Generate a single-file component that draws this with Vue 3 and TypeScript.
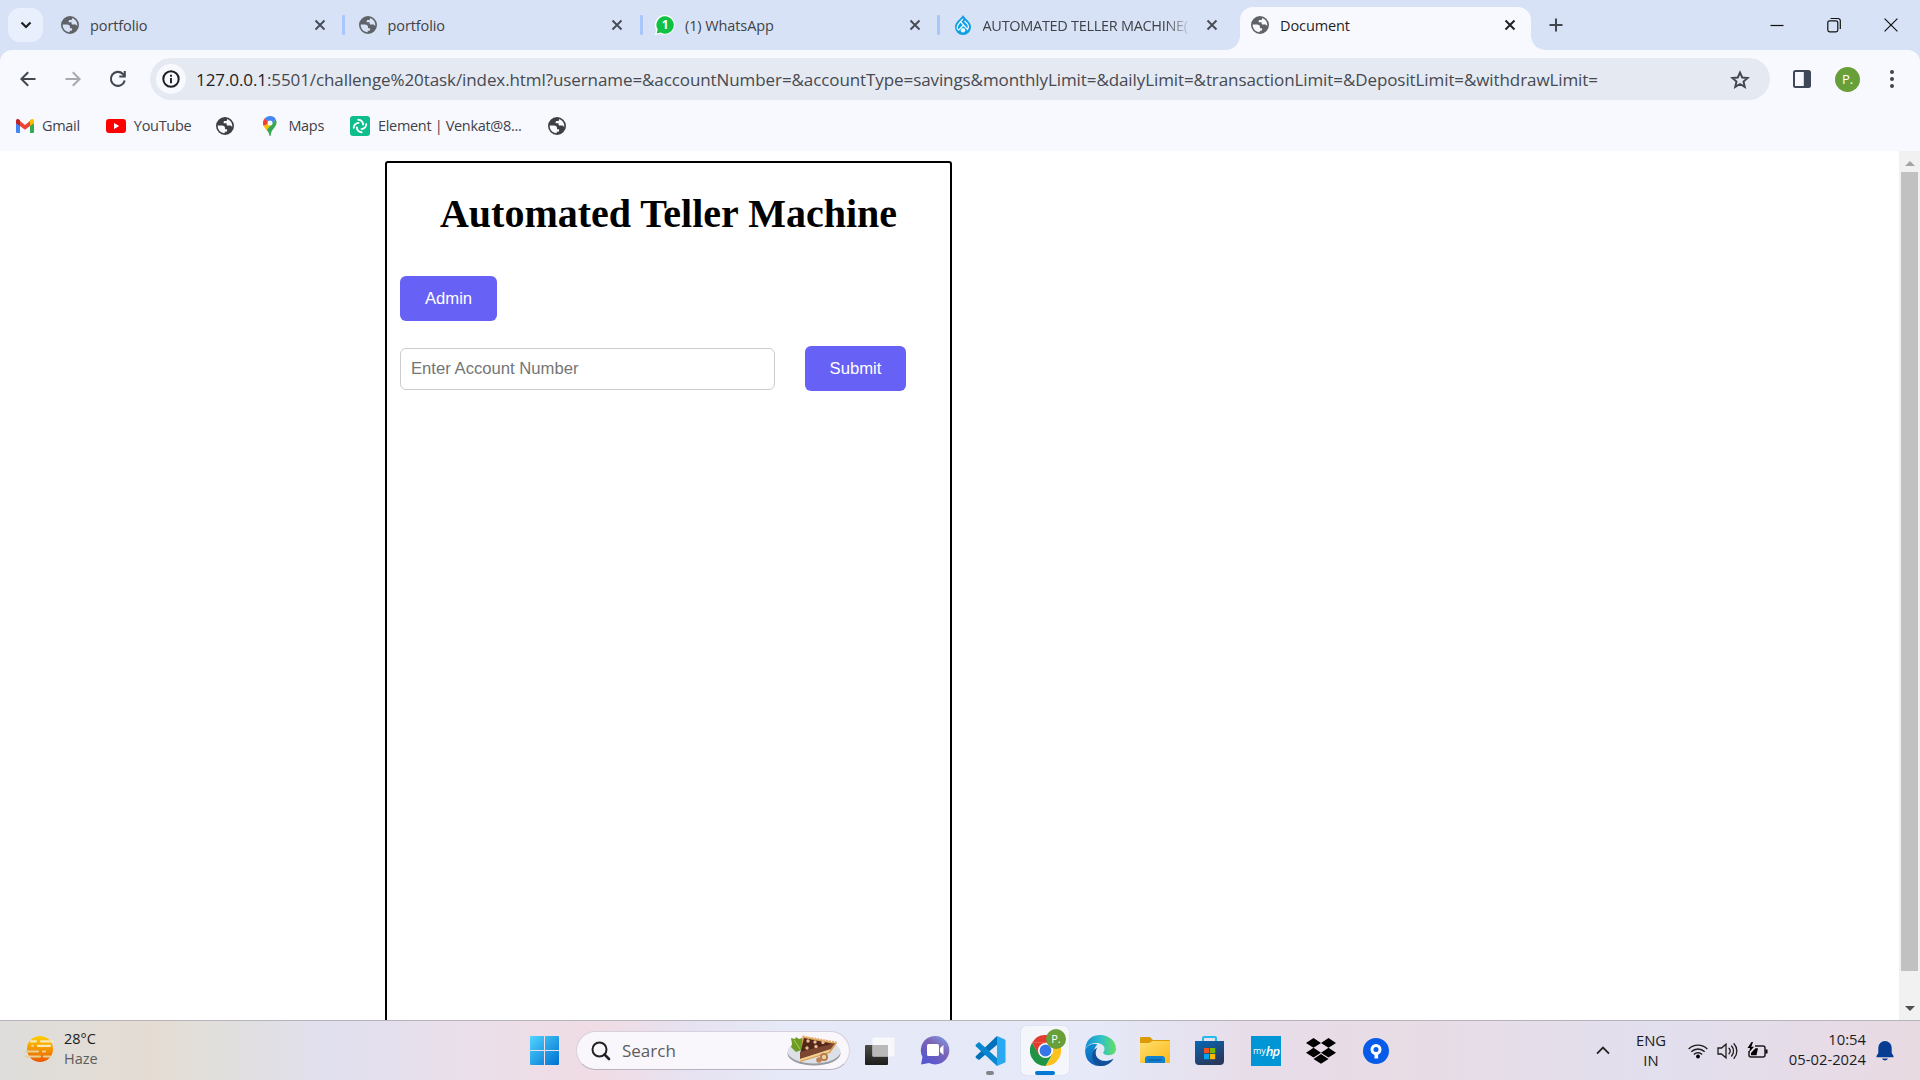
<script setup lang="ts">
interface Tab { title: string; icon: string; active?: boolean; cls: string }
const tabs: Tab[] = [
  { title: 'portfolio', icon: 'globe', cls: 't-port' },
  { title: 'portfolio', icon: 'globe', cls: 't-port' },
  { title: '(1) WhatsApp', icon: 'whatsapp', cls: 't-wa' },
  { title: 'AUTOMATED TELLER MACHINE(', icon: 'drop', cls: 't-atm' },
  { title: 'Document', icon: 'globe', active: true, cls: 't-doc' },
]
const query = ':5501/challenge%20task/index.html?username=&accountNumber=&accountType=savings&monthlyLimit=&dailyLimit=&transactionLimit=&DepositLimit=&withdrawLimit='
const globe = 'M10 0a10 10 0 1 0 0 20a10 10 0 0 0 0-20M12.2 2.3c3.400 1 5.900 4.100 5.900 7.700 0 .4 0 .8-.1 1.200-.6-1-1.500-1.700-2.600-1.700h-2.200c-.9 0-1.400-.5-1.400-1.300V7H8.500V5.700c0-.8.6-1.300 1.400-1.300h1.400c.8 0 1.200-.8.900-2.100M2 9.500h4.600c2.200 0 3.400 1 3.400 2.800v1.300h2.300v1.600c0 .8-.5 1.300-1.300 1.300H9.700v1.600C5.300 17.900 1.900 14.300 1.900 10z'
</script>

<template>
  <div class="screen">
    <header class="tabstrip">
      <div class="tabsearch"><svg width="12" height="8" viewBox="0 0 12 8"><path d="M1.500 1.500L6 6l4.500-4.500" fill="none" stroke="#1f1f1f" stroke-width="2.200"/></svg></div>
      <div class="tabs">
        <div v-for="(t, i) in tabs" :key="i" class="tab" :class="{ active: t.active, divided: i < 3 }">
          <svg v-if="t.icon === 'globe'" class="fav" width="18" height="18" viewBox="0 0 20 20"><path :d="globe" fill="#5f6368" fill-rule="evenodd"/></svg>
          <svg v-else-if="t.icon === 'whatsapp'" class="fav" width="20" height="20" viewBox="0 0 20 20"><path d="M10 0a10 9.800 0 1 1-4.500 18.700L0 20l1.300-5A10 10 0 0 1 10 0" fill="#fff"/><path d="M10 1.300a8.700 8.700 0 1 1-4.300 16.200l-4 .9 1-3.900A8.700 8.700 0 0 1 10 1.300" fill="#10c143"/><text x="10.200" y="14.400" text-anchor="middle" font-size="12" font-weight="700" fill="#fff">1</text></svg>
          <svg v-else class="fav" width="18" height="20" viewBox="0 0 18 20"><path d="M9 0c1.500 3.500 8 6.500 8 12a8 8 0 0 1-16 0C1 6.500 7.500 3.500 9 0" fill="#0c9fe5"/><g fill="none" stroke="#e9f5fc" stroke-width="1.300"><path d="M9 4L5 8.500q-3.300 4-.5 6.800M6.800 7l6.700 7.500q2-3-.5-6L10.500 6M4.500 15.300L9.500 10"/></g><circle cx="9" cy="15.200" r="2.300" fill="#e9f5fc"/></svg>
          <span class="title" :class="t.cls">{{ t.title }}</span>
          <svg class="close" width="12" height="12" viewBox="0 0 12 12"><path d="M1.500 1.500l9 9m0-9l-9 9" :stroke="t.active ? '#1f1f1f' : '#474b55'" stroke-width="1.900"/></svg>
        </div>
      </div>
      <svg class="plus" width="14" height="14" viewBox="0 0 14 14"><path d="M7 .5v13M.5 7h13" stroke="#42474f" stroke-width="2"/></svg>
      <div class="winctl">
        <svg width="14" height="14" viewBox="0 0 14 14"><path d="M.5 7.500h13" stroke="#111" stroke-width="1.200"/></svg>
        <svg width="14" height="16" viewBox="0 0 14 16"><g fill="none" stroke="#111" stroke-width="1.200"><rect x=".8" y="3.800" width="10" height="11" rx="1.800"/><path d="M3.500 1.500H11A2.300 2.300 0 0 1 13.300 4v8"/></g></svg>
        <svg width="14" height="14" viewBox="0 0 14 14"><path d="M.6.6l12.800 12.800m0-12.800L.6 13.400" stroke="#111" stroke-width="1.200"/></svg>
      </div>
    </header>

    <nav class="toolbar">
      <svg class="back" width="16" height="16" viewBox="0 0 16 16"><path d="M15.500 8H1.500M8.200 1.200L1.400 8l6.800 6.800" fill="none" stroke="#42474f" stroke-width="2"/></svg>
      <svg class="fwd" width="16" height="16" viewBox="0 0 16 16"><path d="M.5 8h14M7.800 1.200L14.600 8l-6.800 6.800" fill="none" stroke="#a6a9b0" stroke-width="2"/></svg>
      <svg class="reload" width="18" height="18" viewBox="0 0 18 18"><path d="M15.700 10.500A7 7 0 1 1 13.900 4l1.600 1.700" fill="none" stroke="#42474f" stroke-width="2.100"/><path d="M16.800 1v6.500h-6.500V5.400h4.400V1z" fill="#42474f"/></svg>
      <div class="omnibox">
        <span class="info"><svg width="18" height="18" viewBox="0 0 18 18"><circle cx="9" cy="9" r="7.700" fill="none" stroke="#1f1f1f" stroke-width="2"/><path d="M9 8v5.200M9 4.800v1.900" stroke="#1f1f1f" stroke-width="1.900"/></svg></span>
        <span class="url"><b>127.0.0.1</b>{{ query }}</span>
        <svg class="star" width="20" height="19" viewBox="0 0 20 19"><path d="M10 2.500l2.200 5 5.500.5-4.200 3.600 1.300 5.300L10 14l-4.800 2.900 1.300-5.300L2.300 8l5.500-.5z" fill="none" stroke="#42474f" stroke-width="1.900"/></svg>
      </div>
      <svg class="panel" width="18" height="18" viewBox="0 0 18 18"><rect x="1" y="1" width="16" height="16" rx="1.500" fill="none" stroke="#3f4858" stroke-width="2"/><path d="M10.800 1H17v16h-6.200z" fill="#3f4858"/></svg>
      <span class="avatar">P.</span>
      <svg class="dots" width="6" height="18" viewBox="0 0 6 18" fill="#42474f"><circle cx="3" cy="2" r="2"/><circle cx="3" cy="9" r="2"/><circle cx="3" cy="16" r="2"/></svg>
    </nav>

    <div class="bookmarks">
      <span class="bm"><svg width="18" height="14" viewBox="0 0 18 14"><path d="M0 1.500V13q0 1 1 1h3V6z" fill="#4285f4"/><path d="M18 1.500V13q0 1-1 1h-3V6z" fill="#34a853"/><path d="M4 2l5 4 5-4v5l-5 3.800L4 7z" fill="#ea4335"/><path d="M0 2C0 0 2-.5 3.200.6L4 1.200V7L0 4.200z" fill="#c5221f"/><path d="M18 2c0-2-2-2.500-3.200-1.400l-.8.6V7l4-2.800z" fill="#fbbc04"/></svg><span>Gmail</span></span>
      <span class="bm yt"><svg width="20" height="14" viewBox="0 0 20 14"><rect width="20" height="14" rx="3" fill="#f00"/><path d="M8 4l5.200 3L8 10z" fill="#fff"/></svg><span>YouTube</span></span>
      <svg class="g1" width="18" height="18" viewBox="0 0 20 20"><path :d="globe" fill="#3c4043" fill-rule="evenodd"/></svg>
      <span class="bm maps"><svg width="14" height="20" viewBox="0 0 14 20"><path d="M7 0a7 7 0 0 0-5.400 2.500L7 7z" fill="#4285f4"/><path d="M1.600 2.500A7 7 0 0 0 .7 10L7 7z" fill="#ea4335"/><path d="M.7 10c.7 1.500 2 2.900 3 4.100L12 4.500 9.200 5.500z" fill="#fbbc04"/><path d="M12.700 3.200C15 8 12 10.600 9.800 13.500 8.500 15.300 8 17 7.600 19.500q-.6 1-1.200 0C6 17 5.200 15.700 3.700 14.100z" fill="#34a853"/><path d="M7 0c2.500 0 4.700 1.200 5.700 3.200L9 7.500 5 4.500z" fill="#4285f4"/><circle cx="7" cy="7" r="2.500" fill="#fff"/></svg><span>Maps</span></span>
      <span class="bm el"><svg width="20" height="20" viewBox="0 0 20 20"><rect width="20" height="20" rx="3" fill="#0dbd8b"/><g fill="none" stroke="#fff" stroke-width="1.900" stroke-linecap="round"><path d="M8.300 3.800a4.700 4.700 0 0 1 4.800 4.700"/><path d="M16.200 8.300a4.700 4.700 0 0 1-4.700 4.800M11.700 16.200a4.700 4.700 0 0 1-4.800-4.700M3.800 11.700a4.700 4.700 0 0 1 4.700-4.800"/></g></svg><span>Element | Venkat@8...</span></span>
      <svg class="g2" width="18" height="18" viewBox="0 0 20 20"><path :d="globe" fill="#3c4043" fill-rule="evenodd"/></svg>
    </div>

    <main class="page">
      <section class="atm">
        <h1>Automated Teller Machine</h1>
        <button class="btn admin">Admin</button>
        <div class="row">
          <input placeholder="Enter Account Number">
          <button class="btn submit">Submit</button>
        </div>
      </section>
      <aside class="scroll">
        <svg width="10" height="5" viewBox="0 0 10 5"><path d="M0 5l5-5 5 5z" fill="#a3a3a3"/></svg>
        <div class="track"><div class="thumb"></div></div>
        <svg width="10" height="5" viewBox="0 0 10 5"><path d="M0 0l5 5 5-5z" fill="#505050"/></svg>
      </aside>
    </main>

    <footer class="taskbar">
      <div class="weather">
        <svg width="32" height="28" viewBox="0 0 32 28"><defs><linearGradient id="sun" x2="0" y2="1"><stop stop-color="#ffd000"/><stop offset="1" stop-color="#eb5a00"/></linearGradient></defs><circle cx="16" cy="14" r="13" fill="url(#sun)"/><g stroke-linecap="round" fill="none" stroke-width="2.200"><path d="M7 6.300h5m5 0h12M14 10.800h12" stroke="#f8e9b5"/><path d="M8 10.800h1M2 16.500h12m5 0h2M2 21.500h14m4 0h6" stroke="#e7cf98"/></g></svg>
        <div><p class="temp">28°C</p><p class="haze">Haze</p></div>
      </div>
      <div class="center">
        <svg class="win" width="30" height="30" viewBox="0 0 30 30"><defs><linearGradient id="wg" x2="1" y2="1"><stop stop-color="#4fd5ff"/><stop offset="1" stop-color="#006fd0"/></linearGradient></defs><path d="M1 0h13v14H0V1q0-1 1-1M15 0h13q1 0 1 1v13H15zM0 15h14v14H1q-1 0-1-1zM15 15h14v13q0 1-1 1H15z" fill="url(#wg)"/></svg>
        <div class="search">
          <svg class="lens" width="20" height="20" viewBox="0 0 20 20"><circle cx="8.500" cy="8.500" r="7" fill="none" stroke="#222" stroke-width="2"/><path d="M13.500 13.500l4.500 4.500" stroke="#222" stroke-width="2.600" stroke-linecap="round"/></svg>
          <span>Search</span>
          <svg class="pie" width="54" height="32" viewBox="0 0 54 32"><ellipse cx="27" cy="18.500" rx="26.500" ry="12" fill="#979ba1"/><ellipse cx="27" cy="16.500" rx="26.500" ry="12" fill="#dde1e7"/><path d="M4 3l4 1 1-2 3 2 3-1 2 5-3 7-5 2-5-5 1-3z" fill="#6d9b24"/><path d="M7 5l6 9" stroke="#b0cf51"/><path d="M15.500 1.500L50 8l-7 10-30 9z" fill="#d89b50"/><path d="M17 3l30 6-34 10z" fill="#502818"/><path d="M13 17L48 8l-5 7-30 9z" fill="#7d4630"/><path d="M13 24L44 14l-2 3-29 9z" fill="#f0cf92"/><path d="M15.500 1.500l34 6" stroke="#e7a960" stroke-width="2" stroke-dasharray="2 1"/><g fill="#edb893"><circle cx="21" cy="6" r="1.700"/><circle cx="28" cy="7" r="1.700"/><circle cx="36" cy="7.500" r="1.700"/><circle cx="20" cy="13" r="1.700"/><circle cx="29" cy="11.500" r="1.700"/></g><circle cx="37" cy="22" r="4" fill="#b57848"/><circle cx="37" cy="22" r="2.200" fill="#ecd1a5"/><circle cx="32" cy="25" r="2.800" fill="#c18252"/></svg>
        </div>
        <svg class="task" width="30" height="28" viewBox="0 0 30 28"><defs><linearGradient id="tv" x2="0" y2="1"><stop stop-color="#4d4d4a"/><stop offset="1" stop-color="#1c1c1a"/></linearGradient></defs><rect y="8" width="23" height="20" rx="1" fill="url(#tv)"/><rect x="7.500" y=".5" width="22" height="19" rx="1" fill="#fafafa" opacity=".9"/><path d="M7.500 8H23v11.500H7.500z" fill="#b9b9b9"/></svg>
        <svg class="teams" width="30" height="29" viewBox="0 0 30 29"><defs><linearGradient id="tm" x1="1" x2=".3" y2="1"><stop stop-color="#7ea5ee"/><stop offset=".45" stop-color="#7d65b5"/><stop offset="1" stop-color="#5557d0"/></linearGradient></defs><path d="M15 0a14.200 14.200 0 1 1-6 27L1 28.500 2.500 21A14.200 14.200 0 0 1 15 0" fill="url(#tm)"/><rect x="7" y="8" width="12" height="12" rx="1.500" fill="#fff"/><path d="M20 12l3.500-3v10L20 16z" fill="#fff"/></svg>
        <div class="slot"><svg width="31" height="30" viewBox="0 0 31 30"><path d="M22 0l1 8L4 24l-3-2q-1-1 0-2z" fill="#0070bb"/><path d="M4 6l19 17-1 7L1 10.500q-1-1 0-2z" fill="#0787cf"/><path d="M22 0l7.500 3.200q1 .5 1 1.500v20.500q0 1-1 1.500L22 30z" fill="#29a9f2"/></svg><i class="gray"></i></div>
        <div class="slot chrome">
          <svg width="31" height="31" viewBox="0 0 30 30"><path d="M2 7.500A15 15 0 0 1 28 7.500H15z" fill="#e33b2e"/><path d="M28 7.500A15 15 0 0 1 15 30l6.500-11.200L22 7.500z" fill="#fcc31e"/><path d="M2 7.500A15 15 0 0 0 15 30l6.500-11.300L9 19z" fill="#1f9447"/><path d="M2 7.500L8.500 18.800 15 7.500z" fill="#e33b2e"/><circle cx="15" cy="15" r="7.300" fill="#fff"/><circle cx="15" cy="15" r="5.700" fill="#3577e8"/></svg>
          <span class="badge">P.</span><i class="blue"></i>
        </div>
        <svg class="edge" width="31" height="31" viewBox="0 0 30 30"><defs><linearGradient id="eg" x2="1"><stop stop-color="#168ed5"/><stop offset=".5" stop-color="#2fc0cb"/><stop offset="1" stop-color="#65df61"/></linearGradient><linearGradient id="eb" x2="0" y2="1"><stop stop-color="#0f8fcf"/><stop offset="1" stop-color="#0c60b8"/></linearGradient></defs><path d="M.3 13C2-1 15-1.500 22 1.800c6 2.800 8 7.600 8 11.700 0 4-3.300 6-7 6-3.500 0-6-1.200-5.300-2.800 3.500-5-1-9-6.700-9-4.500 0-8 1.500-10.700 5.300" fill="url(#eg)"/><path d="M.2 13.500C3 9 8 8 12 9.200c-6 5-2.500 14.500 6 15.800 4 .5 7-.8 9.500-2C22 31 12 31.500 6 27.500 1 24 0 19 .2 13.500" fill="url(#eb)"/><path d="M12 12c-3.500 5-1.500 12.500 6 13.500 4.500.5 7.500-1 9.700-2.500-3 5-8.300 7.300-13 7C5 28.500 5 15 12 12" fill="#134e98"/></svg>
        <svg class="files" width="30" height="27" viewBox="0 0 30 27"><defs><linearGradient id="fg" x2="1" y2="1"><stop stop-color="#ffdf70"/><stop offset="1" stop-color="#fab918"/></linearGradient></defs><path d="M0 1q0-1 1-1h9l3 3h16q1 0 1 1v5H0z" fill="#dd9a07"/><path d="M0 6h9l3.500-2H30v21q0 1-1 1H1q-1 0-1-1z" fill="url(#fg)"/><path d="M5 26v-4q0-3 3-3h14q3 0 3 3v4z" fill="#1180ce"/><path d="M8.500 23h13" stroke="#07599c" stroke-width="1.200"/></svg>
        <svg class="store" width="30" height="30" viewBox="0 0 30 30"><defs><linearGradient id="sg" x2=".5" y2="1"><stop stop-color="#0768b5"/><stop offset="1" stop-color="#29385e"/></linearGradient></defs><path d="M8 7V2q0-1 1-1h11q1 0 1 1v5" fill="none" stroke="#26b9ef" stroke-width="2"/><path d="M0 5h29v20q0 4-4 4H4q-4 0-4-4z" fill="url(#sg)"/><path d="M9 12h5.200v5.200H9z" fill="#f25022"/><path d="M15 12h5.200v5.200H15z" fill="#7fba00"/><path d="M9 18h5.200v5.200H9z" fill="#00a4ef"/><path d="M15 18h5.200v5.200H15z" fill="#ffb900"/></svg>
        <span class="myhp"><span>my</span><b>hp</b></span>
        <svg class="dropbox" width="30" height="26" viewBox="0 0 30 26"><path d="M7.500 0L15 4.900 7.500 9.800 0 4.900zM22.500 0L30 4.900l-7.500 4.900L15 4.900zM7.500 9.800l7.500 4.900-7.500 4.900L0 14.700zM22.500 9.800l7.500 4.900-7.500 4.900-7.500-4.900zM7.500 20.900L15 16l7.500 4.900L15 25.800z" /></svg>
        <svg class="pin" width="26" height="26" viewBox="0 0 26 26"><circle cx="13" cy="13" r="13" fill="#075be9"/><circle cx="13" cy="11.500" r="4" fill="none" stroke="#fff" stroke-width="3"/><path d="M11.500 14.500h3.600v6h-3.600z" fill="#fff"/></svg>
      </div>
      <div class="tray">
        <svg class="chev" width="14" height="9" viewBox="0 0 14 9"><path d="M1 7.700L7 1.500l6 6.200" fill="none" stroke="#222" stroke-width="1.800"/></svg>
        <div class="lang"><p>ENG</p><p>IN</p></div>
        <svg class="wifi" width="20" height="16" viewBox="0 0 20 16"><g fill="none" stroke="#1c1c1c" stroke-width="1.400"><path d="M.7 6a13 13 0 0 1 18.600 0M3.300 8.700a9.500 9.500 0 0 1 13.400 0M5.900 11.400a5.800 5.800 0 0 1 8.200 0"/></g><circle cx="10" cy="13.500" r="1.900"/></svg>
        <svg class="vol" width="21" height="18" viewBox="0 0 21 18"><g fill="none" stroke="#1c1c1c" stroke-width="1.300" stroke-linecap="round"><path d="M1 6h3.500L9 2.200v13.600L4.500 12H1z"/><path d="M12 6.300a4 4 0 0 1 0 5.400M14.600 4a7.500 7.500 0 0 1 0 10M17 1.800a10.500 10.500 0 0 1 0 14.400"/></g></svg>
        <svg class="bat" width="21" height="17" viewBox="0 0 21 17"><path d="M8 4h8q2 0 2 2v7q0 2-2 2H4q-2 0-2-2V9" fill="none" stroke="#1c1c1c" stroke-width="1.500"/><path d="M18.500 7.500h2v4h-2zM4 13.200V11l4.500-4.700H11l-1.500 6.900zM4.500 0L.5 6H3L2 10.500 7 4.700H4.300L6 0z"/></svg>
        <div class="clock"><p>10:54</p><p>05-02-2024</p></div>
        <svg class="bell" width="18" height="20" viewBox="0 0 18 20"><path d="M9 0a6.700 6.700 0 0 1 6.700 6.700V12l1.800 3v1.200H.5V15l1.800-3V6.700A6.700 6.700 0 0 1 9 0M6 17.500h6q-.8 2-3 2t-3-2" fill="#063c91"/></svg>
      </div>
    </footer>
  </div>
</template>

<style>
body { margin: 0; overflow: hidden; }
</style>
<style scoped>
* { box-sizing: border-box; }
p { margin: 0; }
svg { display: block; flex: none; }
.screen { width: 1920px; height: 1080px; display: flex; flex-direction: column; background: #fff; overflow: hidden; font-family: "Open Sans", "Noto Sans", sans-serif; color: #3f4247; }
.tabstrip { height: 50px; background: #d8e2f6; display: flex; flex: none; box-shadow: 0 13px 0 #d8e2f6; }
.tabsearch { width: 35px; height: 34px; margin: 8px 0 0 8px; border-radius: 12px; background: #e9effd; display: flex; align-items: center; justify-content: center; }
.tabs { display: flex; margin-left: 4px; }
.tab { width: 297.500px; height: 50px; padding: 0 19px 0 13px; display: flex; align-items: center; position: relative; font-size: 14.500px; letter-spacing: -.1px; }
.tab.divided::after { content: ""; position: absolute; right: -.5px; top: 15px; width: 3px; height: 20px; background: #a8c7fa; border-radius: 1px; }
.tab.active { background: #f8f9ff; height: 43px; margin-top: 7px; border-radius: 13px 13px 0 0; width: 291px; margin-left: 3px; padding: 0 15px 7px 10px; color: #1f1f1f; }
.tab.active::before, .tab.active::after { content: ""; position: absolute; bottom: 0; width: 14px; height: 14px; }
.tab.active::before { left: -14px; background: radial-gradient(circle at 0 0, transparent 13.500px, #f8f9ff 14px); }
.tab.active::after { right: -14px; background: radial-gradient(circle at 100% 0, transparent 13.500px, #f8f9ff 14px); }
.fav { width: 20px; }
.title { margin-left: 10px; flex: 1; white-space: nowrap; }
.t-atm { letter-spacing: -.3px; flex: 0 0 209px; margin-right: auto; -webkit-mask-image: linear-gradient(90deg, #000 87%, transparent); mask-image: linear-gradient(90deg, #000 87%, transparent); }
.plus { margin: 18px 0 0 18px; }
.winctl { display: flex; align-items: center; gap: 43px; margin: 0 22px 0 auto; height: 49px; }
.toolbar { height: 60px; background: #f8f9ff; flex: none; display: flex; align-items: center; padding-bottom: 2px; border-radius: 12px 12px 0 0; position: relative; }
.back { margin-left: 20px; }
.fwd { margin-left: 29px; }
.reload { margin-left: 28px; }
.omnibox { margin-left: 23px; width: 1620px; height: 42px; border-radius: 21px; background: #e4e9f2; display: flex; align-items: center; }
.info { width: 30px; height: 30px; margin-left: 6px; border-radius: 50%; background: #f8f9ff; display: flex; align-items: center; justify-content: center; }
.url { margin-left: 10px; font-size: 17px; white-space: nowrap; letter-spacing: -.09px; color: #474a50; }
.url b { font-weight: 400; color: #1f1f1f; }
.star { margin-left: auto; margin-right: 20px; }
.panel { margin-left: 23px; }
.avatar { margin-left: 24px; width: 25px; height: 25px; border-radius: 50%; background: #689f38; color: #fff; font-size: 13px; line-height: 24px; text-align: center; }
.dots { margin-left: 29px; }
.bookmarks { height: 41px; flex: none; background: #f8f9ff; display: flex; align-items: center; padding: 0 0 10px 16px; font-size: 14.500px; letter-spacing: -.3px; }
.bm { display: flex; align-items: center; white-space: nowrap; }
.bm > span { margin: -1px 0 0 8px; }
.yt { margin-left: 26px; }
.g1 { margin-left: 25px; }
.maps { margin-left: 29px; }
.maps > span { margin-left: 11px; }
.el { margin-left: 26px; }
.el > span { margin-left: 8px; letter-spacing: -.33px; }
.g2 { margin-left: 27px; }
.page { flex: 1; display: flex; overflow: hidden; }
.atm { margin: 10px 0 0 385px; width: 567px; height: 900px; border: 2px solid #000; border-radius: 3px; padding: 0 13px; flex: none; }
h1 { font: 700 40px/46px "Liberation Serif", serif; color: #000; margin: 28px 0 39px; text-align: center; white-space: nowrap; }
.btn { height: 45px; border: 0; border-radius: 6px; background: #6861f6; color: #fff; font: 16.670px "Liberation Sans", sans-serif; display: block; padding: 0; }
.admin { width: 97px; }
.row { display: flex; align-items: center; margin-top: 25px; }
input { width: 375px; height: 42px; border: 1px solid #ccc; border-radius: 6px; padding: 0 10px; font: 16.670px "Liberation Sans", sans-serif; background: #fff; }
input::placeholder { color: #757575; }
.submit { width: 101px; margin-left: 30px; }
.scroll { margin-left: auto; width: 21px; background: #f1f1f1; display: flex; flex-direction: column; align-items: center; padding: 10px 0 9px; }
.track { flex: 1; width: 17px; margin: 6px 0; }
.thumb { height: 799px; background: #c1c1c1; }
.taskbar { height: 60px; flex: none; border-top: 1px solid #b6b3ba; display: flex; position: relative; background: linear-gradient(90deg, #dedddb 0, #e4dcd3 150px, #e1dfdc 220px, #e1e0ef 330px, #eadfea 470px, #f0dce4 600px, #e7e2f2 690px, #e6e9f7 780px, #e5e9f8 1100px, #e7dde9 1250px, #e8dce5 1400px, #e2dfee 1660px, #e7dbe6 1850px, #e8dae1 1920px); }
.weather { display: flex; padding: 14px 0 0 24px; width: 530px; flex: none; font-size: 14.500px; line-height: 20px; color: #5c5c5c; }
.weather > div { margin: -6px 0 0 8px; }
.temp { color: #1c1c1c; }
.center { display: flex; align-items: center; height: 59px; }
.search { margin-left: 16px; width: 274px; height: 39px; border-radius: 20px; border: 1px solid #d8d0dc; border-bottom-color: #b9b3bf; background: #f9f7fc; display: flex; align-items: center; padding: 0 8px 0 14px; font-size: 17px; color: #5d5d5d; }
.search span { margin: -1px 0 0 11px; }
.pie { margin-left: auto; }
.task { margin-left: 15px; }
.teams { margin-left: 25px; }
.slot { position: relative; width: 48px; height: 49px; margin-left: 16px; display: flex; align-items: center; justify-content: center; }
.slot i { position: absolute; height: 4px; border-radius: 2px; bottom: 0; left: 50%; transform: translateX(-50%); }
.gray { width: 8px; background: #85838c; }
.blue { width: 20px; background: #0078d4; }
.chrome { margin-left: 7px; background: #f4f6fc; border-radius: 5px; box-shadow: 0 0 1px #b9bcca; }
.badge { position: absolute; right: 3px; top: 3px; width: 20px; height: 20px; border-radius: 50%; background: #689f38; color: #fff; font-size: 11px; line-height: 20px; text-align: center; }
.edge { margin-left: 16px; }
.files { margin-left: 24px; }
.store { margin-left: 25px; }
.myhp { margin-left: 26px; width: 30px; height: 30px; background: #0096d6; color: #fff; font-size: 9px; display: flex; align-items: center; justify-content: center; }
.myhp b { font-style: italic; font-size: 13px; font-weight: 600; letter-spacing: -1px; }
.dropbox { margin-left: 25px; }
.pin { margin-left: 27px; }
.tray { position: absolute; right: 26px; top: 0; height: 59px; display: flex; align-items: center; color: #1c1c1c; font-size: 14.800px; line-height: 20px; }
.lang { width: 40px; text-align: center; margin: -2px 17px 0 21px; }
.vol { margin-left: 9px; }
.bat { margin-left: 9px; }
.clock { width: 84px; text-align: right; margin: -3px 10px 0 14px; white-space: nowrap; display: flex; flex-direction: column; align-items: flex-end; }
</style>
